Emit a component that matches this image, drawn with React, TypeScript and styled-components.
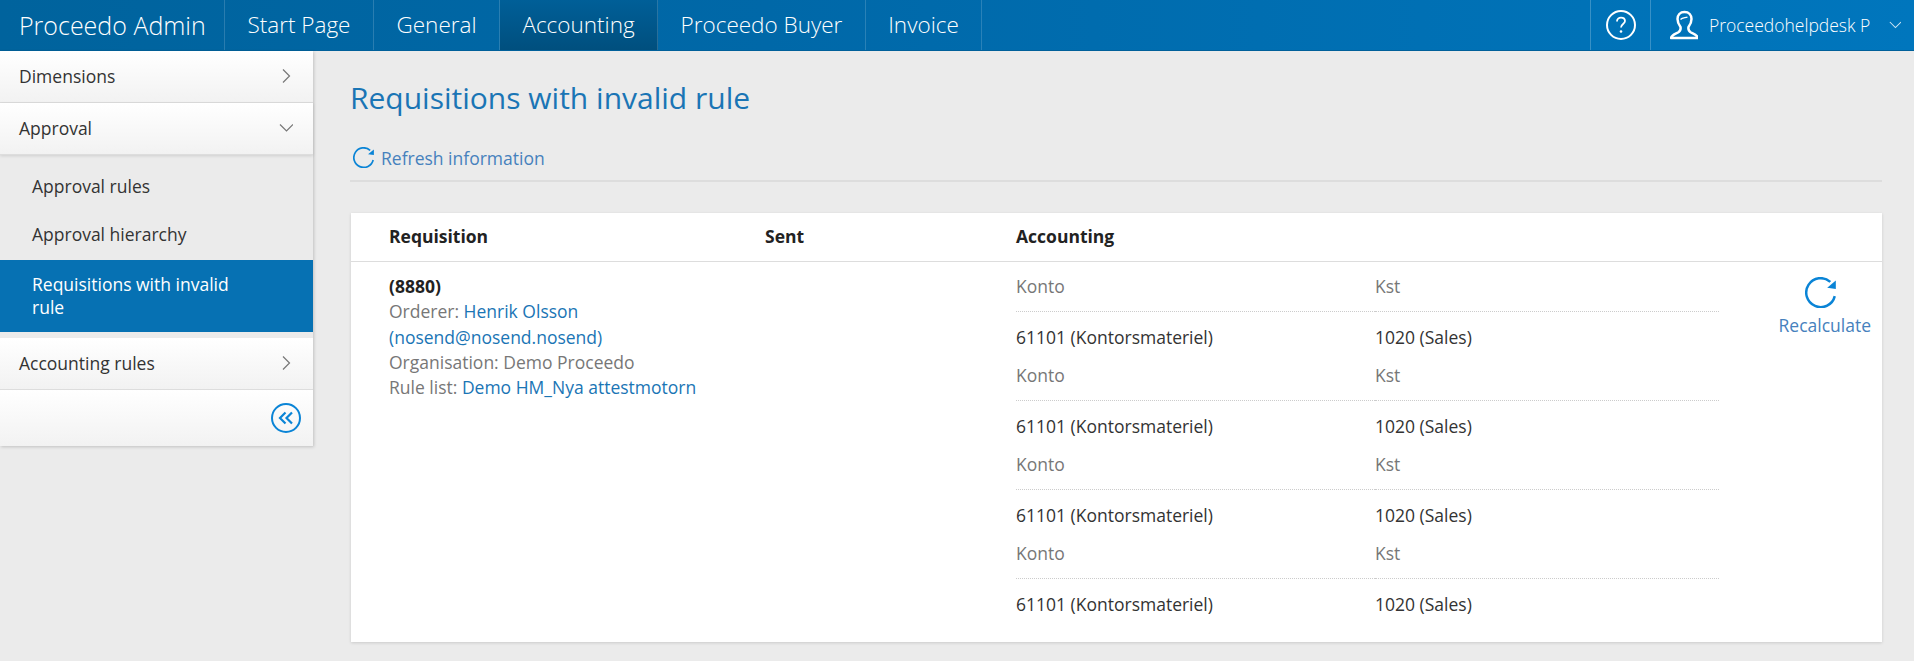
import React, { FC } from 'react';
import styled, { createGlobalStyle } from 'styled-components';

const GlobalStyle = createGlobalStyle`
  html, body {
    margin: 0;
    padding: 0;
    height: 100%;
    background: #ebebeb;
    overflow: hidden;
  }
  body {
    font-family: 'Open Sans', sans-serif;
    font-size: 17.5px;
    color: #333;
  }
  * { box-sizing: border-box; }
`;

const Page = styled.div`
  width: 1914px;
  height: 661px;
  display: flex;
  flex-direction: column;
  overflow: hidden;
`;

const TopBar = styled.header`
  height: 51px;
  flex: none;
  display: flex;
  background: linear-gradient(90deg, #00639d 0%, #0068a8 40%, #0076bd 100%);
  border-bottom: 1px solid #00609a;
`;

const Brand = styled.div`
  width: 225px;
  font-size: 25px;
  font-weight: 300;
  line-height: 50px;
  color: #fff;
  padding-left: 19px;
  white-space: nowrap;
  border-right: 1px solid rgba(255, 255, 255, 0.16);
`;

const NavItem = styled.div<{ $width: number; $active?: boolean }>`
  width: ${p => p.$width}px;
  font-size: 22.5px;
  font-weight: 300;
  line-height: 50px;
  color: #fff;
  text-align: center;
  white-space: nowrap;
  border-right: 1px solid rgba(255, 255, 255, 0.16);
  background: ${p => (p.$active ? 'linear-gradient(180deg, #005f98 0%, #004f7e 100%)' : 'transparent')};
`;

const TopRight = styled.div`
  margin-left: auto;
  display: flex;
  align-items: stretch;
`;

const HelpButton = styled.div`
  width: 61px;
  display: flex;
  align-items: center;
  justify-content: center;
  border-left: 1px solid rgba(255, 255, 255, 0.22);
  border-right: 1px solid rgba(255, 255, 255, 0.22);
`;

const UserBox = styled.div`
  width: 263px;
  display: flex;
  align-items: center;
  padding-left: 19px;
  color: #fff;
  font-size: 17.5px;
  font-weight: 300;
  white-space: nowrap;
`;

const UserName = styled.span`
  margin: 0 19px 0 11px;
`;

const Body = styled.div`
  flex: 1;
  display: flex;
  align-items: flex-start;
`;

const Sidebar = styled.aside`
  width: 313px;
  flex: none;
  background: #ebebeb;
  box-shadow: 1px 1px 3px rgba(0, 0, 0, 0.18);
`;

const Section = styled.div<{ $open?: boolean }>`
  height: 52px;
  display: flex;
  align-items: center;
  justify-content: space-between;
  padding: 0 20px 2px 19px;
  font-size: 17.5px;
  color: #333;
  background: linear-gradient(180deg, #fff 0%, #f2f2f2 100%);
  border-bottom: 1px solid #ddd;
  box-shadow: ${p => (p.$open ? '0 1px 3px rgba(0,0,0,0.12)' : 'none')};
`;

const SubList = styled.div`
  padding: 9px 0 6px;
`;

const SubItem = styled.div<{ $active?: boolean }>`
  height: ${p => (p.$active ? '72px' : '48px')};
  padding: ${p => (p.$active ? '13px 60px 13px 32px' : '11px 32px')};
  font-size: 17.5px;
  line-height: 23px;
  color: ${p => (p.$active ? '#fff' : '#333')};
  background: ${p => (p.$active ? '#0671b3' : 'transparent')};
`;

const CollapseRow = styled.div`
  height: 56px;
  display: flex;
  align-items: center;
  justify-content: flex-end;
  padding-right: 12px;
  background: linear-gradient(180deg, #fff 0%, #f2f2f2 100%);
`;

const Main = styled.main`
  flex: 1;
  padding: 0 32px 0 38px;
  min-width: 0;
`;

const Title = styled.h1`
  margin: 27px 0 0 -1px;
  font-size: 30px;
  font-weight: 400;
  line-height: 40px;
  color: #1a75b5;
`;

const RefreshBar = styled.div`
  margin: 19px 0 0 -1px;
  height: 45px;
  display: flex;
  align-items: center;
  gap: 7px;
  padding: 0 0 2px 3px;
  font-size: 17.5px;
  color: #4681bd;
  border-bottom: 2px solid #ddd;
`;

const Card = styled.section`
  margin-top: 31px;
  background: #fff;
  box-shadow: 0 1px 3px rgba(0, 0, 0, 0.14);
`;

const CardHeader = styled.div`
  height: 49px;
  display: grid;
  grid-template-columns: 376px 251px 1fr;
  align-items: center;
  padding: 0 0 2px 38px;
  font-size: 17.5px;
  font-weight: 700;
  color: #222;
  border-bottom: 1px solid #ddd;
`;

const CardRow = styled.div`
  display: grid;
  grid-template-columns: 627px 703px 1fr;
  padding-left: 38px;
  height: 380px;
`;

const Info = styled.div`
  padding-top: 12px;
  font-size: 17.5px;
  line-height: 25.3px;
  color: #777;
`;

const ReqId = styled.div`
  font-weight: 700;
  color: #222;
`;

const BlueLink = styled.a`
  color: #1a75b5;
`;

const LineGroup = styled.div`
  display: grid;
  grid-template-columns: 359px 344px;
  font-size: 17.5px;
`;

const KeyCell = styled.div`
  color: #777;
  height: 50px;
  display: flex;
  align-items: center;
  padding-bottom: 2px;
  border-bottom: 1px dotted #ccc;
`;

const ValueCell = styled.div`
  color: #333;
  height: 39px;
  padding-top: 13px;
  line-height: 24px;
`;

const RecalcCell = styled.div`
  display: flex;
  justify-content: flex-end;
  padding: 15px 11px 0 0;
`;

const RecalcButton = styled.div`
  display: flex;
  flex-direction: column;
  align-items: center;
  gap: 5px;
  height: max-content;
  line-height: 25px;
  color: #4681bd;
  font-size: 17.5px;
`;

const RecalcIcon = styled.div`
  display: flex;
  margin-right: 8px;
`;

const Refresh: FC<{ size: number }> = ({ size }) => (
  <svg width={size} height={size} viewBox="0 0 30 30" fill="none">
    <path d="M28.8 18.5A14 14 0 1 1 24.500 4.700" stroke="#0a84d6" strokeWidth="2.400" fill="none" />
    <path d="M29.800 3.500 29.800 11.500 21.500 10.500Z" fill="#0a84d6" />
  </svg>
);

const Chevron: FC<{ dir: 'right' | 'down'; color?: string; size?: number }> = ({ dir, color = '#777', size = 14 }) => (
  <svg width={size} height={size} viewBox="0 0 14 14" fill="none">
    <path d={dir === 'right' ? 'M4 .5l6.500 6.500-6.500 6.500' : 'M1 3.500l6.500 6.500 6.500-6.500'} stroke={color} strokeWidth="1.200" />
  </svg>
);

const lines = [0, 1, 2, 3];

export default function App() {
  return (
    <Page>
      <GlobalStyle />
      <TopBar>
        <Brand>Proceedo Admin</Brand>
        <NavItem $width={149}>Start Page</NavItem>
        <NavItem $width={126}>General</NavItem>
        <NavItem $width={158} $active>Accounting</NavItem>
        <NavItem $width={208}>Proceedo Buyer</NavItem>
        <NavItem $width={116}>Invoice</NavItem>
        <TopRight>
          <HelpButton>
            <svg width="32" height="32" viewBox="0 0 32 32" fill="none">
              <circle cx="16" cy="16" r="14" stroke="#fff" strokeWidth="2" />
              <path d="M12 12.500c0-2.400 1.800-3.900 4-3.900s4 1.400 4 3.500c0 3-4 3-4 6.400" stroke="#fff" strokeWidth="1.800" fill="none" />
              <circle cx="16" cy="22.500" r="1.300" fill="#fff" />
            </svg>
          </HelpButton>
          <UserBox>
            <svg width="28" height="30" viewBox="0 0 28 30" fill="none">
              <path d="M14.500 2C10 2 7.500 5 7.500 9c0 3.500 1.500 6 3 8 .5 2.500 0 4-2.500 5.500-3 1.500-6 2-7 5.500h27c-1-3.500-4-4-7-5.500-2.500-1.500-3-3-2.500-5.500 1.500-2 3-4.500 3-8 0-4-2.500-7-7-7Z" stroke="#fff" strokeWidth="2.500" strokeLinejoin="round" />
              <path d="M10.500 9.500c2-2 4.500-1.500 7-2.500" stroke="#fff" strokeWidth="1.300" />
            </svg>
            <UserName>Proceedohelpdesk P</UserName>
            <Chevron dir="down" color="#cfe6f5" size={12} />
          </UserBox>
        </TopRight>
      </TopBar>
      <Body>
        <Sidebar>
          <Section>Dimensions <Chevron dir="right" /></Section>
          <Section $open>Approval <Chevron dir="down" /></Section>
          <SubList>
            <SubItem>Approval rules</SubItem>
            <SubItem>Approval hierarchy</SubItem>
            <SubItem $active>Requisitions with invalid rule</SubItem>
          </SubList>
          <Section>Accounting rules <Chevron dir="right" /></Section>
          <CollapseRow>
            <svg width="30" height="30" viewBox="0 0 30 30" fill="none">
              <circle cx="15" cy="15" r="14" stroke="#0a84d6" strokeWidth="2" />
              <path d="M14.500 9.500 9 15l5.500 5.500M21 9.500 15.500 15l5.500 5.500" stroke="#0a84d6" strokeWidth="2.200" />
            </svg>
          </CollapseRow>
        </Sidebar>
        <Main>
          <Title>Requisitions with invalid rule</Title>
          <RefreshBar><Refresh size={21} />Refresh information</RefreshBar>
          <Card>
            <CardHeader>
              <div>Requisition</div>
              <div>Sent</div>
              <div>Accounting</div>
            </CardHeader>
            <CardRow>
              <Info>
                <ReqId>(8880)</ReqId>
                <div>Orderer: <BlueLink>Henrik Olsson</BlueLink></div>
                <div><BlueLink>(nosend@nosend.nosend)</BlueLink></div>
                <div>Organisation: Demo Proceedo</div>
                <div>Rule list: <BlueLink>Demo HM_Nya attestmotorn</BlueLink></div>
              </Info>
              <div>
                {lines.map(i => (
                  <LineGroup key={i}>
                    <KeyCell>Konto</KeyCell>
                    <KeyCell>Kst</KeyCell>
                    <ValueCell>61101 (Kontorsmateriel)</ValueCell>
                    <ValueCell>1020 (Sales)</ValueCell>
                  </LineGroup>
                ))}
              </div>
              <RecalcCell>
                <RecalcButton>
                  <RecalcIcon><Refresh size={31} /></RecalcIcon>
                  Recalculate
                </RecalcButton>
              </RecalcCell>
            </CardRow>
          </Card>
        </Main>
      </Body>
    </Page>
  );
}
